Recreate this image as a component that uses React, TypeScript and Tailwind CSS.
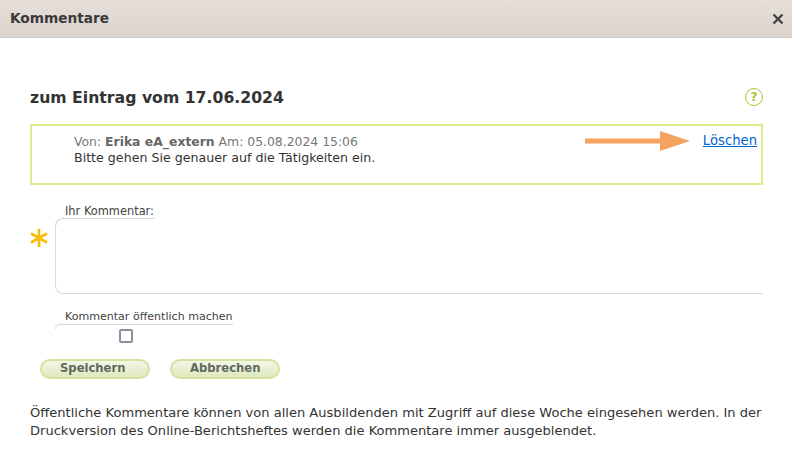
export default function App() {
  const font = { fontFamily: '"DejaVu Sans", Verdana, sans-serif' };
  return (
    <div className="w-[792px] h-[475px] bg-white overflow-hidden text-[#333]" style={font}>
      <header className="h-[38px] bg-gradient-to-b from-[#e6dfda] to-[#dcd3cd] border-b border-[#cfcac6] flex items-center justify-between pl-[10px] pr-[8px]">
        <h1 className="text-[13.7px] font-bold text-[#3a3a3a]">Kommentare</h1>
        <svg width="12" height="12" viewBox="0 0 12 12"><path d="M1.5 1.5 L10.5 10.5 M10.5 1.5 L1.5 10.5" stroke="#444" strokeWidth="2.4" /></svg>
      </header>
      <main className="pl-[30px] pr-[29px]">
        <div className="flex items-center justify-between mt-[47px] h-[24px]">
          <h2 className="text-[15.7px] font-bold text-[#333] pt-[2px]">zum Eintrag vom 17.06.2024</h2>
          <div className="w-[18px] h-[18px] rounded-full border border-[#a9c72f] flex items-center justify-center text-[12px] font-bold text-[#a9c72f]">?</div>
        </div>
        <section className="relative mt-[15px] h-[61px] border-2 border-[#dcec8c] pl-[42px] pr-[4px] pt-[8px] flex justify-between">
          <div>
            <div className="text-[12.4px] leading-[16px] text-[#777]">Von: <b className="text-[#666]">Erika eA_extern</b> Am: 05.08.2024 15:06</div>
            <div className="text-[12.63px] leading-[16px] text-[#333]">Bitte gehen Sie genauer auf die Tätigkeiten ein.</div>
          </div>
          <a href="#" className="text-[13.2px] leading-[14px] h-[15px] text-[#0066cc] underline">Löschen</a>
          <svg className="absolute left-[553px] top-[5px]" width="108" height="22" viewBox="0 0 108 22"><path d="M0 7.5 H75 V0 L105 10 L75 20 V12.5 H0 Z" fill="#f4a45f" /></svg>
        </section>
        <div className="flex mt-[20px]">
          <div className="w-[25px] pt-[24px] shrink-0">
            <svg width="18" height="18" viewBox="0 0 18 18"><path d="M9 0 V18 M1 4.5 L17 13.5 M17 4.5 L1 13.5" stroke="#fbbc05" strokeWidth="2.6" /></svg>
          </div>
          <div className="flex-1">
            <div className="pl-[10px] text-[11.4px] leading-[13px] text-[#444]">Ihr Kommentar:</div>
            <div className="relative h-[75px] mt-[1px] border-l border-b border-[#d8d8d8] rounded-bl-[8px] rounded-tl-[8px]">
              <div className="absolute -left-px -top-px w-[100px] h-[8px] border-t border-l border-[#d8d8d8] rounded-tl-[8px]" />
            </div>
          </div>
        </div>
        <div className="ml-[25px] mt-[16px]">
          <div className="pl-[10px] text-[11.05px] leading-[13px] text-[#444]">Kommentar öffentlich machen</div>
          <div className="relative w-[178px] h-[5px] mt-[1px] border-t border-l border-[#d8d8d8] rounded-tl-[8px]" />
        </div>
        <div className="ml-[89px] w-[14px] h-[14px] border-2 border-[#8f8f9d] rounded-[2px] bg-white" />
        <div className="flex gap-[20px] ml-[10px] mt-[16px]">
          {["Speichern", "Abbrechen"].map((label) => (
            <button key={label} className="w-[110px] h-[20px] rounded-full border-2 border-[#d4e29d] bg-gradient-to-b from-[#f3f6e6] to-[#dfe9bd] text-left pl-[18px] text-[11.6px] font-bold text-[#5f6a5f] leading-none">{label}</button>
          ))}
        </div>
        <p className="mt-[25px] text-[13.05px] leading-[18px] text-[#333] w-[740px]">Öffentliche Kommentare können von allen Ausbildenden mit Zugriff auf diese Woche eingesehen werden. In der Druckversion des Online-Berichtsheftes werden die Kommentare immer ausgeblendet.</p>
      </main>
    </div>
  );
}
